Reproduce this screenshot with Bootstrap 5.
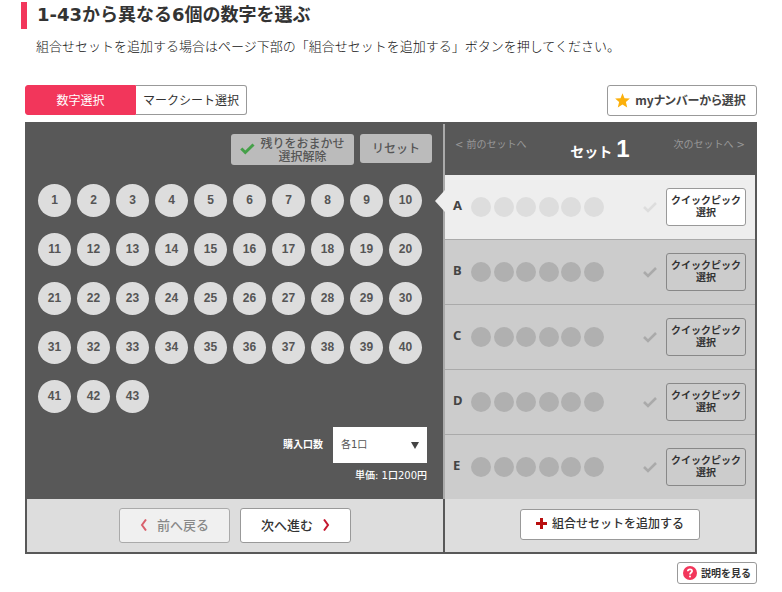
<!DOCTYPE html>
<html lang="ja">
<head>
<meta charset="utf-8">
<meta name="viewport" content="width=device-width, initial-scale=1">
<title>1-43から異なる6個の数字を選ぶ</title>
<link href="https://cdn.jsdelivr.net/npm/bootstrap@5.3.0/dist/css/bootstrap.min.css" rel="stylesheet">
<style>
:root { --ink: #333; --panel: #585858; --line: #999; --accent: #f2365b; }
body { font-family: "Noto Sans", "Noto Sans CJK JP", sans-serif; font-size: 13px; line-height: 20px; color: var(--ink); background: #fff; }
.page { padding: 2px 25px 8px 21px; }
.page-title { font-family: "DejaVu Sans", "Noto Sans CJK JP", sans-serif; font-size: 18px; line-height: 25px; font-weight: 700; border-left: 6px solid var(--accent); padding: 0 0 2px 10px; margin: 0 0 7px; }
.guide { font-family: "Noto Sans CJK JP", sans-serif; font-weight: 300; color: #111; padding-left: 15px; margin: 0 0 29px; }
.picker { margin-left: 4px; }
.plain-btn { font-family: "Noto Sans CJK JP", sans-serif; font-size: 12px; line-height: 16px; font-weight: 500; color: var(--ink); background: #fff; border: 1px solid var(--line); border-radius: 3px; padding: 0 0 1px; display: flex; align-items: center; justify-content: center; }
.plain-btn:hover { background: #f6f6f6; }
.tab-btn { width: 111px; height: 30px; font-weight: 400; }
.tab-btn.first { border-radius: 3px 0 0 3px; }
.tab-btn.second { border-left: 0; border-radius: 0 3px 3px 0; }
.tab-btn.first, .tab-btn.first:hover { color: #fff; background: var(--accent); border-color: var(--accent); }
.my-btn { width: 150px; height: 31px; gap: 5px; padding-right: 3px; font-weight: 700; font-feature-settings: "palt"; color: #444; }
.board { border: 2px solid var(--panel); margin-top: 6px; }
.pane-numbers { flex: 4 1 0; min-width: 0; }
.pane-sets { flex: 3 1 0; min-width: 0; }
.number-area { background: var(--panel); color: #fff; padding: 10px 11px 13px; }
.toolbar { gap: 6px; }
.gray-btn { background: #bbb; border: 0; color: #555; line-height: 13px; }
.gray-btn:hover { background: #c6c6c6; }
.auto-btn { width: 123px; height: 31px; gap: 5px; padding-bottom: 2px; }
.reset-btn { width: 72px; height: 29px; padding-bottom: 2px; }
.number-grid { display: grid; grid-template-columns: repeat(10, 33px); column-gap: 6px; row-gap: 16px; margin-top: 19px; }
.ball { width: 33px; height: 33px; border: 0; border-radius: 50%; background: #ddd; color: #555; font: 700 12px/33px "Liberation Sans", Arial, sans-serif; padding: 0; }
.ball:hover { background: #fff; }
.quantity { margin-top: 14px; padding-right: 5px; font: 700 10px/16px "DejaVu Sans", "Noto Sans CJK JP", sans-serif; }
.count-row { gap: 10px; }
.count-box { width: 94px; }
.count-box select { appearance: none; width: 100%; height: 36px; border: 0; border-radius: 0; background: #fff; color: #555; font-size: 10px; font-weight: 400; padding: 0 8px; }
.count-box svg { right: 8px; top: 15px; pointer-events: none; }
.price { margin-top: 5px; line-height: 16px; font-weight: 500; }
.foot { height: 53px; background: #ddd; }
.step-row { gap: 10px; }
.step-btn { width: 111px; height: 35px; gap: 9px; font-size: 13px; padding-bottom: 2px; }
.step-btn:disabled { background: #f0f0f0; color: #888; border-color: #aaa; }
.set-area { border-left: 2px solid #aaa; }
.set-head { background: var(--panel); height: 51px; padding: 0 10px; }
.set-link { color: #999; font: 400 10px/16px "DejaVu Sans", "Noto Sans CJK JP", sans-serif; padding-bottom: 10px; text-decoration: none; }
.set-link:hover { color: #fff; }
.set-name { color: #fff; font: 700 14px/28px "Noto Sans CJK JP", sans-serif; margin: 0; gap: 4px; }
.set-name span { font: 700 24px/28px "Liberation Sans", Arial, sans-serif; }
.set-row { height: 65px; background: #ccc; border-bottom: 1px solid #aaa; padding: 0 9px 0 8px; color: #444; }
.set-row:last-child { height: 64px; border-bottom: 0; }
.set-row.current { background: #eee; }
.pointer { left: -10px; top: 15px; }
.set-letter { width: 18px; font: 700 13px/20px "Noto Sans", sans-serif; padding-bottom: 4px; }
.slots { width: 133px; }
.slots i { width: 20px; height: 20px; border-radius: 50%; background: #b0b0b0; }
.current .slots i { background: #ddd; }
.done-mark { color: #aaa; margin: 0 9px 0 auto; }
.current .done-mark { color: #ddd; }
.quick-btn { width: 80px; height: 38px; font-size: 10px; line-height: 12px; font-weight: 700; background: transparent; border-color: #888; padding-bottom: 2px; }
.current .quick-btn { background: #fff; border-color: var(--line); }
.sets-foot { border-left: 2px solid var(--panel); padding: 0 0 3px 20px; }
.add-btn { width: 180px; height: 31px; gap: 5px; padding-bottom: 2px; }
.help-btn { width: 80px; height: 22px; gap: 4px; font-size: 10px; font-weight: 700; margin-top: 8px; }
</style>
<script src="https://cdn.jsdelivr.net/npm/bootstrap@5.3.0/dist/js/bootstrap.bundle.min.js"></script>
</head>
<body>
<main class="page">
  <h1 class="page-title">1-43から異なる6個の数字を選ぶ</h1>
  <p class="guide">組合せセットを追加する場合はページ下部の「組合せセットを追加する」ボタンを押してください。</p>

  <div class="picker">
    <div class="d-flex justify-content-between">
      <div class="d-flex">
        <button type="button" class="plain-btn tab-btn first" aria-pressed="true">数字選択</button>
        <button type="button" class="plain-btn tab-btn second" aria-pressed="false">マークシート選択</button>
      </div>
      <button type="button" class="plain-btn my-btn">
        <svg width="15" height="15" viewBox="0 0 15 15" aria-hidden="true"><path fill="#fbb00c" d="M7.5 0.2 9.5 5.2 14.9 5.4 10.9 8.9 12.2 14.4 7.5 11.6 2.8 14.4 4.1 8.9 0.1 5.4 5.5 5.2z"/></svg>
        <span>myナンバーから選択</span>
      </button>
    </div>

    <div class="board d-flex">
      <section class="pane-numbers d-flex flex-column">
        <div class="number-area flex-grow-1">
          <div class="d-flex justify-content-end align-items-start toolbar">
            <button type="button" class="plain-btn gray-btn auto-btn">
              <svg width="15" height="12" viewBox="0 0 15 12" aria-hidden="true"><path fill="none" stroke="#45a049" stroke-width="3" d="M1.3 5.5 5.3 9.5 13.5 1.5"/></svg>
              <span>残りをおまかせ<br>選択解除</span>
            </button>
            <button type="button" class="plain-btn gray-btn reset-btn">リセット</button>
          </div>
          <div class="number-grid" id="numbers"></div>
          <div class="quantity">
            <div class="count-row d-flex justify-content-end align-items-center">
              <label for="count">購入口数</label>
              <div class="count-box position-relative">
                <select id="count"><option>各1口</option><option>各2口</option><option>各3口</option></select>
                <svg class="position-absolute" width="8" height="7" viewBox="0 0 8 7" aria-hidden="true"><path fill="#444" d="M0 0h8L4 7z"/></svg>
              </div>
            </div>
            <div class="price text-end">単価: 1口200円</div>
          </div>
        </div>
        <div class="foot step-row d-flex justify-content-center align-items-center">
          <button type="button" class="plain-btn step-btn" disabled>
            <svg width="8" height="12" viewBox="0 0 8 12" aria-hidden="true"><path fill="none" stroke="#d9606c" stroke-width="2" d="M6 0.5 2 6 6 11.5"/></svg>
            <span>前へ戻る</span>
          </button>
          <button type="button" class="plain-btn step-btn">
            <span>次へ進む</span>
            <svg width="8" height="12" viewBox="0 0 8 12" aria-hidden="true"><path fill="none" stroke="#c4162e" stroke-width="2" d="M2 0.5 6 6 2 11.5"/></svg>
          </button>
        </div>
      </section>

      <section class="pane-sets d-flex flex-column">
        <div class="set-area flex-grow-1">
          <div class="set-head d-flex justify-content-between align-items-center">
            <a class="set-link" href="#">&lt; 前のセットへ</a>
            <h2 class="set-name d-flex align-items-baseline">セット<span>1</span></h2>
            <a class="set-link" href="#">次のセットへ &gt;</a>
          </div>
          <div id="sets"></div>
        </div>
        <div class="foot sets-foot d-flex justify-content-center align-items-center">
          <button type="button" class="plain-btn add-btn">
            <svg width="11" height="11" viewBox="0 0 11 11" aria-hidden="true"><path fill="#b90e0e" d="M4 0h3v4h4v3H7v4H4V7H0V4h4z"/></svg>
            <span>組合せセットを追加する</span>
          </button>
        </div>
      </section>
    </div>

    <div class="d-flex justify-content-end">
      <button type="button" class="plain-btn help-btn">
        <svg width="14" height="14" viewBox="0 0 14 14" aria-hidden="true"><circle cx="7" cy="7" r="7" fill="#f2365b"/><path fill="none" stroke="#fff" stroke-width="1.7" d="M4.8 5.2C4.9 2.7 9.2 2.8 9.1 5.1 9 6.5 7 6.6 7 8.5"/><circle cx="7" cy="10.6" r="1" fill="#fff"/></svg>
        <span>説明を見る</span>
      </button>
    </div>
  </div>
</main>
<script>
document.getElementById('numbers').innerHTML = Array.from({ length: 43 }, (_, i) =>
  `<button type="button" class="ball">${i + 1}</button>`).join('');
document.getElementById('sets').innerHTML = ['A', 'B', 'C', 'D', 'E'].map((name, i) => `
  <div class="set-row d-flex align-items-center position-relative ${i === 0 ? 'current' : ''}">
    ${i === 0 ? '<svg class="pointer position-absolute" width="10" height="22" viewBox="0 0 10 22" aria-hidden="true"><path fill="#eee" d="M10 0v22L0 11z"/></svg>' : ''}
    <span class="set-letter">${name}</span>
    <div class="slots d-flex justify-content-between"><i></i><i></i><i></i><i></i><i></i><i></i></div>
    <svg class="done-mark" width="14" height="11" viewBox="0 0 14 11" aria-hidden="true"><path fill="none" stroke="currentColor" stroke-width="2.6" d="M1 5 5 9 13 1"/></svg>
    <button type="button" class="plain-btn quick-btn">クイックピック<br>選択</button>
  </div>`).join('');
</script>
</body>
</html>
